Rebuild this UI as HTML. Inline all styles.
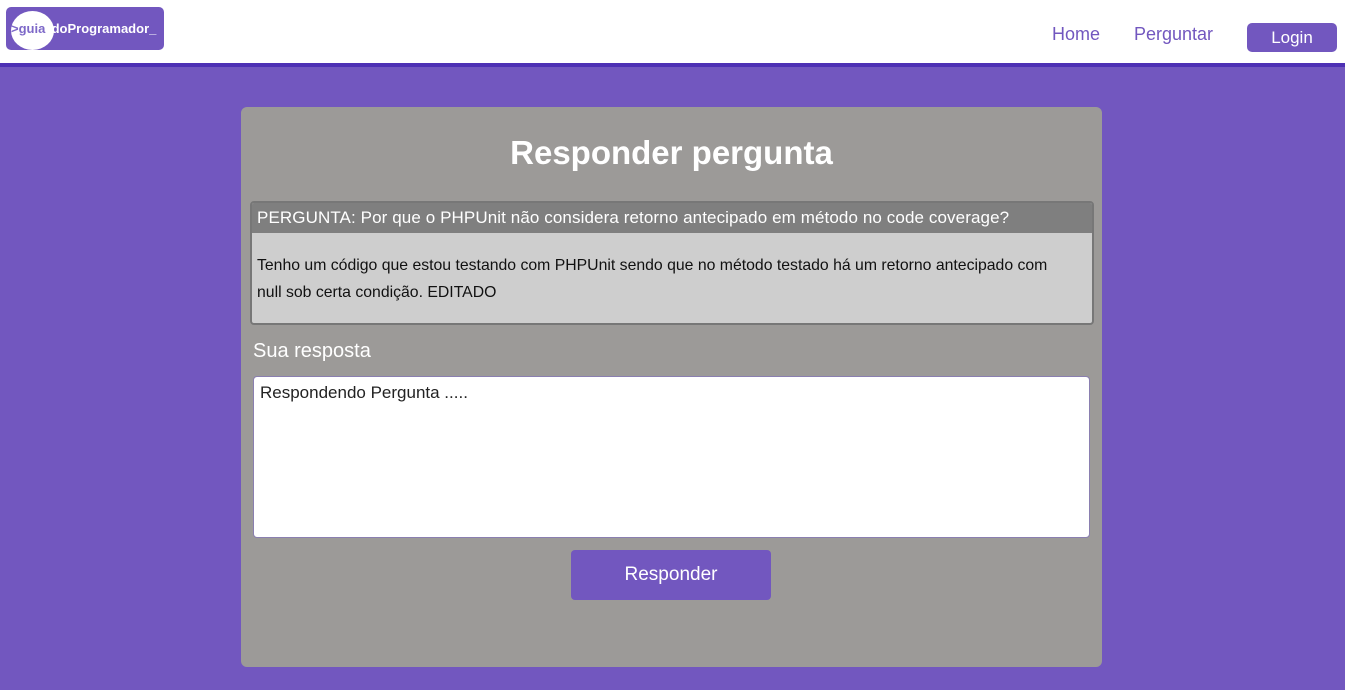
<!DOCTYPE html>
<html><head><meta charset="utf-8"><style>
*{box-sizing:border-box;margin:0;padding:0}
body{width:1345px;height:690px;background:#7257bf;font-family:"Liberation Sans",sans-serif;position:relative;overflow:hidden}
.hdr{position:absolute;left:0;top:0;width:1345px;background:#fff;border-bottom:4px solid #4d30b4;height:67px}
.logo{position:absolute;left:6px;top:7px;width:158px;height:43px;background:#7257bf;border-radius:5px;overflow:hidden}
.logo .c{position:absolute;left:5px;top:4px;width:43px;height:39px;border-radius:50%;background:#fff}
.logo .a{position:absolute;left:5px;top:14px;color:#7d68c8;font-weight:bold;font-size:13px;white-space:nowrap}
.logo .b{position:absolute;left:42px;top:14px;color:#fff;font-weight:bold;font-size:13px;white-space:nowrap}
.nav{position:absolute;top:24px;font-size:18px;color:#7257bf}
.login{position:absolute;left:1247px;top:23px;width:90px;height:29px;background:#7257bf;border-radius:5px;color:#fff;font-size:17px;text-align:center;line-height:29px}
.card{position:absolute;left:241px;top:107px;width:861px;height:560px;background:#9c9a98;border-radius:6px}
h1{position:absolute;left:0;width:100%;top:27px;text-align:center;color:#fff;font-size:33px;font-weight:bold}
.q{position:absolute;left:9px;top:94px;width:844px;height:124px;border:2px solid #777;border-radius:4px;background:#cecece;overflow:hidden}
.qh{background:#7f7f7f;color:#fff;font-size:17px;height:30px;line-height:30px;padding-left:5px;letter-spacing:0.1px}
.qb{padding:19px 5px 0;font-size:15.8px;line-height:27px;color:#111}
.lbl{position:absolute;left:12px;top:233px;color:#fff;font-size:20px}
.ta{position:absolute;left:12px;top:269px;width:837px;height:162px;background:#fff;border:1px solid #8a7fb0;border-radius:4px;padding:6px 6px;font-size:17px;color:#222}
.btn{position:absolute;left:330px;top:443px;width:200px;height:50px;background:#7257bf;border-radius:4px;color:#fff;font-size:19px;text-align:center;line-height:50px}
</style></head><body>
<div class="hdr">
<div class="logo"><div class="c"></div><span class="a">&gt;guia</span><span class="b">.doProgramador_</span></div>
<div class="nav" style="left:1052px">Home</div>
<div class="nav" style="left:1134px">Perguntar</div>
<div class="login">Login</div>
</div>
<div class="card">
<h1>Responder pergunta</h1>
<div class="q"><div class="qh">PERGUNTA: Por que o PHPUnit não considera retorno antecipado em método no code coverage?</div>
<div class="qb">Tenho um código que estou testando com PHPUnit sendo que no método testado há um retorno antecipado com<br>null sob certa condição. EDITADO</div></div>
<div class="lbl">Sua resposta</div>
<div class="ta">Respondendo Pergunta .....</div>
<div class="btn">Responder</div>
</div>
</body></html>
